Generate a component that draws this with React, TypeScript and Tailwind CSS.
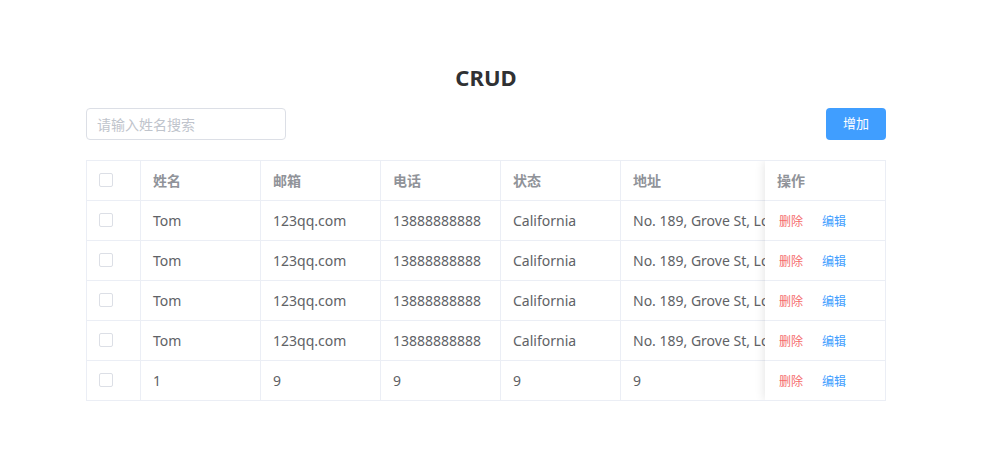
import React from "react";

const rows = [
  { name: "Tom", email: "123qq.com", phone: "13888888888", state: "California", addr: "No. 189, Grove St, Los Angeles" },
  { name: "Tom", email: "123qq.com", phone: "13888888888", state: "California", addr: "No. 189, Grove St, Los Angeles" },
  { name: "Tom", email: "123qq.com", phone: "13888888888", state: "California", addr: "No. 189, Grove St, Los Angeles" },
  { name: "Tom", email: "123qq.com", phone: "13888888888", state: "California", addr: "No. 189, Grove St, Los Angeles" },
  { name: "1", email: "9", phone: "9", state: "9", addr: "9" },
];

const font = { fontFamily: '"Noto Sans", "Noto Sans CJK SC", sans-serif' };

function Checkbox() {
  return <span className="block w-[14px] h-[14px] border border-[#DCDFE6] rounded-[2px] bg-white" />;
}

function Cell({ w, children, header }: { w: string; children?: React.ReactNode; header?: boolean }) {
  return (
    <div
      className={`${w} shrink-0 h-full flex items-center pl-[12px] pb-[1px] border-r border-[#EBEEF5] whitespace-nowrap overflow-hidden text-[14px] ${
        header ? "font-bold text-[#909399]" : "text-[#606266]"
      }`}
    >
      {children}
    </div>
  );
}

export default function App() {
  return (
    <div className="w-[1002px] h-[470px] bg-white" style={font}>
      <div className="ml-[86px] w-[800px] pt-[62px]">
        <h2 className="text-center text-[22px] leading-[30px] font-bold text-[#303133]">CRUD</h2>
        <div className="mt-[16px] flex justify-between items-center">
          <div className="w-[200px] h-[32px] border border-[#DCDFE6] rounded-[4px] flex items-center pl-[10px] text-[14px] text-[#C0C4CC]">
            请输入姓名搜索
          </div>
          <button className="w-[60px] h-[32px] rounded-[4px] bg-[#409EFF] text-white text-[13px]">增加</button>
        </div>
        <div className="mt-[20px] relative border border-[#EBEEF5] overflow-hidden">
          <div className="w-[1000px]">
            <div className="flex h-[40px] border-b border-[#EBEEF5]">
              <Cell w="w-[54px]" header>
                <Checkbox />
              </Cell>
              <Cell w="w-[120px]" header>姓名</Cell>
              <Cell w="w-[120px]" header>邮箱</Cell>
              <Cell w="w-[120px]" header>电话</Cell>
              <Cell w="w-[120px]" header>状态</Cell>
              <Cell w="w-[300px]" header>地址</Cell>
            </div>
            {rows.map((r, i) => (
              <div
                key={i}
                className={`flex ${i < rows.length - 1 ? "h-[40px] border-b border-[#EBEEF5]" : "h-[39px]"}`}
              >
                <Cell w="w-[54px]">
                  <Checkbox />
                </Cell>
                <Cell w="w-[120px]">{r.name}</Cell>
                <Cell w="w-[120px]">{r.email}</Cell>
                <Cell w="w-[120px]">{r.phone}</Cell>
                <Cell w="w-[120px]">{r.state}</Cell>
                <Cell w="w-[300px]">{r.addr}</Cell>
              </div>
            ))}
          </div>
          <div className="absolute right-0 top-0 bottom-0 w-[120px] bg-white shadow-[0_0_10px_rgba(0,0,0,0.12)]">
            <div className="h-[40px] flex items-center pl-[12px] pb-[1px] border-b border-[#EBEEF5] text-[14px] font-bold text-[#909399]">
              操作
            </div>
            {rows.map((_, i) => (
              <div
                key={i}
                className={`flex items-center pl-[14px] pt-[2px] gap-[19px] text-[12px] ${
                  i < rows.length - 1 ? "h-[40px] border-b border-[#EBEEF5]" : "h-[39px]"
                }`}
              >
                <span className="text-[#F56C6C]">删除</span>
                <span className="text-[#409EFF]">编辑</span>
              </div>
            ))}
          </div>
        </div>
      </div>
    </div>
  );
}
